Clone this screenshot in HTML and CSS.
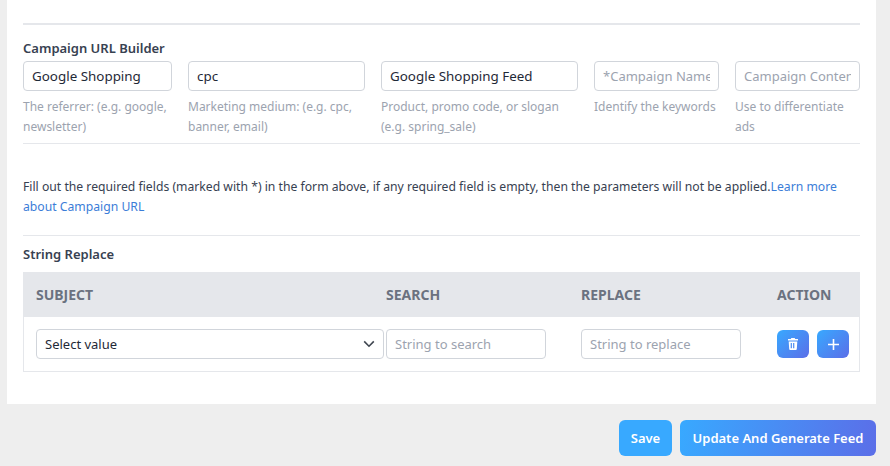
FILE: index.html
```html
<!DOCTYPE html>
<html lang="en">
<head>
  <meta charset="UTF-8">
  <title>Campaign URL Builder</title>
  <link rel="stylesheet" href="styles.css">
</head>
<body>

<div class="panel">
  <hr class="rule-top">

  <h4 class="heading">Campaign URL Builder</h4>
  <div class="builder">
    <div>
      <input type="text" value="Google Shopping">
      <p class="help">The referrer: (e.g. google, newsletter)</p>
    </div>
    <div>
      <input type="text" value="cpc">
      <p class="help">Marketing medium: (e.g. cpc, banner, email)</p>
    </div>
    <div>
      <input type="text" value="Google Shopping Feed">
      <p class="help">Product, promo code, or slogan (e.g. spring_sale)</p>
    </div>
    <div>
      <input type="text" placeholder="*Campaign Name">
      <p class="help">Identify the keywords</p>
    </div>
    <div>
      <input type="text" placeholder="Campaign Content">
      <p class="help">Use to differentiate ads</p>
    </div>
  </div>
  <hr class="rule">

  <p class="note">Fill out the required fields (marked with *) in the form above, if any required field is empty, then the parameters will not be applied.<a href="#">Learn more about Campaign URL</a></p>
  <hr class="rule">

  <h4 class="heading replace-heading">String Replace</h4>
  <div class="table">
    <div class="row head">
      <div>Subject</div>
      <div>Search</div>
      <div>Replace</div>
      <div>Action</div>
    </div>
    <div class="row body-row">
      <div class="select">
        <span>Select value</span>
        <svg width="12" height="8" viewBox="0 0 12 8"><path d="M1.2 1.4 6 6.2l4.8-4.8" fill="none" stroke="#3f4650" stroke-width="1.6"/></svg>
      </div>
      <div><input class="small" type="text" placeholder="String to search"></div>
      <div><input class="small" type="text" placeholder="String to replace"></div>
      <div class="actions">
        <button class="icon-btn">
          <svg width="10" height="12" viewBox="0 0 10 12"><path fill="#fff" d="M3.3 0h3.4l.5 1H10v1.5H0V1h2.8zM.7 3.4h8.6l-.5 7.7a1 1 0 0 1-1 .9H2.2a1 1 0 0 1-1-.9zm2 1.5v5.4h1.2V4.9zm2.4 0v5.4h1.2V4.9z"/></svg>
        </button>
        <button class="icon-btn">
          <svg width="11" height="11" viewBox="0 0 11 11"><path d="M5.5 0v11M0 5.5h11" stroke="#fff" stroke-width="1.6" fill="none"/></svg>
        </button>
      </div>
    </div>
  </div>
</div>

<div class="footer">
  <button class="btn save">Save</button>
  <button class="btn generate">Update And Generate Feed</button>
</div>

</body>
</html>
```

FILE: styles.css
```css
* { box-sizing: border-box; }
body {
  margin: 0;
  height: 466px;
  overflow: hidden;
  background-color: #eeeeee;
  color: #374151;
  font-family: "Noto Sans", "Open Sans", sans-serif;
  font-size: 13px;
}
.panel {
  margin-left: 7px;
  width: 869px;
  height: 404px;
  padding: 23px 16px 0;
  background-color: #fff;
}
hr { margin: 0; border: none; }
.rule-top { height: 2px; background-color: #e5e7eb; }
.rule { height: 1px; background-color: #e5e7eb; }
.heading {
  margin: 14px 0 4px;
  font-size: 13px;
  font-weight: 600;
  line-height: 18px;
  color: #374151;
}
.replace-heading { margin: 9px 0 9px; }
.builder {
  display: grid;
  grid-template-columns: 149px 177px 197px 125px 125px;
  column-gap: 16px;
  height: 82px;
}
input {
  display: block;
  width: 100%;
  height: 30px;
  padding: 0 8px;
  border: 1px solid #d1d5db;
  border-radius: 4px;
  background: #fff;
  color: #1f2937;
  font-family: inherit;
  font-size: 13.4px;
  outline: none;
}
input::placeholder { color: #9ca3af; opacity: 1; font-size: 13px; }
.help {
  margin: 6px 0 0;
  color: #9ca3af;
  font-size: 12px;
  line-height: 20px;
}
.note {
  margin: 33px 0 18px;
  font-size: 12.2px;
  line-height: 20px;
  color: #374151;
}
.note a { color: #3b7dd8; text-decoration: none; }
.table {
  border: 1px solid #e5e7eb;
  border-top: none;
}
.row {
  display: grid;
  grid-template-columns: 350px 195px 196px 1fr;
  align-items: center;
  padding-left: 12px;
}
.row.head {
  height: 45px;
  margin: 0 -1px;
  padding-left: 13px;
  background-color: #e5e7eb;
  color: #6b7280;
  font-size: 14px;
  font-weight: 700;
  text-transform: uppercase;
}
.row.body-row { height: 54px; }
.select {
  display: flex;
  justify-content: space-between;
  align-items: center;
  width: 348px;
  height: 30px;
  padding: 0 8px;
  border: 1px solid #d1d5db;
  border-radius: 4px;
  color: #1f2937;
}
input.small { width: 160px; font-size: 13px; }
.actions { display: flex; gap: 8px; }
.icon-btn {
  display: flex;
  align-items: center;
  justify-content: center;
  width: 32px;
  height: 28px;
  padding: 0;
  border: none;
  border-radius: 6px;
  background: linear-gradient(135deg, #38a9ff, #5b6ee8);
}
.footer {
  display: flex;
  justify-content: flex-end;
  gap: 8px;
  width: 876px;
  padding-top: 16px;
}
.btn {
  height: 36px;
  border: none;
  border-radius: 6px;
  color: #fff;
  font-family: inherit;
  font-size: 13px;
  font-weight: 600;
}
.save { width: 53px; padding: 0; background: #38a9ff; }
.generate {
  width: 196px;
  padding: 0;
  background: linear-gradient(100deg, #38a9ff, #5b6ee8);
}
```
